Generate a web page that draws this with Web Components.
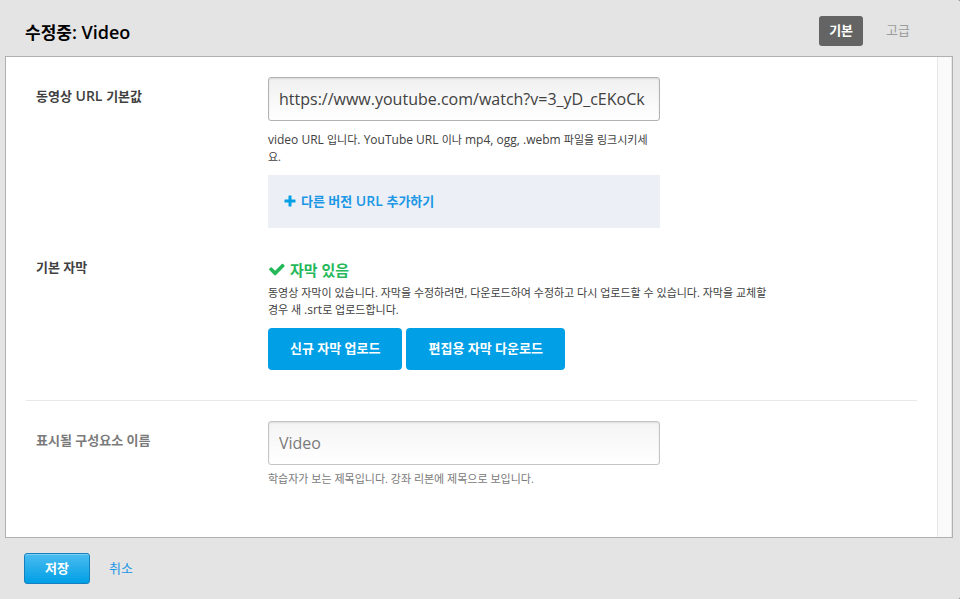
<!DOCTYPE html>
<html lang="ko">
<head>
<meta charset="utf-8">
<title>수정중: Video</title>
<style>
  body {
    margin: 0;
    background: #777;
    color: #414141;
    font-family: "Open Sans", "Noto Sans CJK KR", sans-serif;
    font-size: 13px;
    --blue: #009fe6;
    --link: #1b97e6;
    --green: #25b85a;
  }
  .lat { font-size: 12px; }
  .lat-label { font-size: 14px; }
  .lat-title { font-size: 18px; }
</style>
</head>
<body>
<modal-editor>
  <span slot="title">수정중<span class="lat-title">: Video</span></span>
  <mode-tabs slot="modes"></mode-tabs>
  <settings-row>
    <span slot="name">동영상<span class="lat-label"> URL </span>기본값</span>
    <text-field label="동영상 URL 기본값" value="https://www.youtube.com/watch?v=3_yD_cEKoCk"></text-field>
    <help-text class="spaced"><span class="lat">video URL </span>입니다<span class="lat">. YouTube URL </span>이나<span class="lat"> mp4, ogg, .webm </span>파일을 링크시키세<br>요.</help-text>
    <add-version>다른 버전<span class="lat-label"> URL </span>추가하기</add-version>
  </settings-row>
  <settings-row class="divided">
    <span slot="name">기본 자막</span>
    <status-line>자막 있음</status-line>
    <help-text>동영상 자막이 있습니다. 자막을 수정하려면, 다운로드하여 수정하고 다시 업로드할 수 있습니다. 자막을 교체할<br>경우 새 <span class="lat">.srt</span>로 업로드합니다.</help-text>
    <button-group>
      <action-button>신규 자막 업로드</action-button>
      <action-button>편집용 자막 다운로드</action-button>
    </button-group>
  </settings-row>
  <settings-row class="muted">
    <span slot="name">표시될 구성요소 이름</span>
    <text-field label="표시될 구성요소 이름" value="Video"></text-field>
    <help-text class="near">학습자가 보는 제목입니다. 강좌 리본에 제목으로 보입니다.</help-text>
  </settings-row>
  <modal-actions slot="actions"></modal-actions>
</modal-editor>
<script>
const define = (name, html, setup) => {
  const template = document.createElement('template');
  template.innerHTML = html;
  customElements.define(name, class extends HTMLElement {
    constructor() {
      super();
      this.attachShadow({ mode: 'open' }).append(template.content.cloneNode(true));
    }
    connectedCallback() { if (setup) setup(this, this.shadowRoot); }
  });
};

define('modal-editor', `
  <style>
    :host { display: flex; flex-direction: column; min-height: 100vh; box-sizing: border-box; background: #e4e4e4; border-radius: 0 2px 2px 0; }
    header { display: flex; justify-content: space-between; align-items: center; height: 56px; padding: 0 35px 0 25px; box-sizing: border-box; }
    h2 { margin: 0; padding-top: 8px; color: #000; font-size: 17px; line-height: 24px; font-weight: 600; }
    .panel { flex: 1; display: flex; margin: 0 7px 0 5px; border: 1px solid #b0b0b0; background: #fff; }
    main { flex: 1; padding: 0 20px 20px; }
    .track { width: 13px; background: #fafafa; border: solid #e7e7e7; border-width: 0 1px; }
    footer { display: flex; align-items: center; height: 61px; padding: 0 24px; }
  </style>
  <header><h2><slot name="title"></slot></h2><slot name="modes"></slot></header>
  <div class="panel"><main><slot></slot></main><div class="track"></div></div>
  <footer><slot name="actions"></slot></footer>`);

define('mode-tabs', `
  <style>
    :host { display: flex; gap: 8px; padding-top: 6px; }
    button { height: 30px; padding: 0 10px 4px; border: 0; border-radius: 3px; background: transparent; color: #9b9b9b; font-family: inherit; font-size: 13px; font-weight: 400; }
    button[aria-pressed=true] { background: #646464; color: #fff; font-weight: 600; }
    button + button { padding: 0 15px 4px; }
  </style>
  <button type="button" aria-pressed="true">기본</button><button type="button" aria-pressed="false">고급</button>`);

define('settings-row', `
  <style>
    :host { display: grid; grid-template-columns: 232px minmax(0, 1fr); padding: 20px 10px 0; }
    :host(.divided) { padding-bottom: 30px; border-bottom: 1px solid #e8e8e8; }
    :host(.muted) { color: #7a7a7a; --edge: #c4c4c4; --fill: #f4f4f4; }
    .name { padding-top: 9px; line-height: 20px; font-weight: 600; }
  </style>
  <div class="name"><slot name="name"></slot></div><div><slot></slot></div>`);

define('text-field', `
  <style>
    :host { display: block; max-width: 392px; }
    input { display: block; width: 100%; height: 44px; box-sizing: border-box; padding: 0 10px; border: 1px solid var(--edge, #b2b2b2); border-radius: 3px; background: linear-gradient(var(--fill, #f0f0f0), #fff); box-shadow: inset 0 1px 2px rgba(0,0,0,.1); color: inherit; font-family: inherit; font-size: 16px; outline: 0; }
  </style>
  <input type="text">`,
  (el, root) => {
    const input = root.querySelector('input');
    input.value = el.getAttribute('value');
    input.setAttribute('aria-label', el.getAttribute('label'));
  });

define('help-text', `
  <style>
    :host { display: block; font-size: 11px; line-height: 17px; }
    :host(.spaced) { padding: 10px 0; }
    :host(.near) { padding-top: 5px; }
  </style>
  <slot></slot>`);

define('add-version', `
  <style>
    :host { display: flex; align-items: center; max-width: 392px; height: 53px; padding: 0 16px 2px; box-sizing: border-box; background: #eceff5; }
    a { display: flex; align-items: center; gap: 5px; color: var(--link); font-weight: 600; line-height: 20px; text-decoration: none; }
    svg { fill: var(--blue); }
  </style>
  <a href="#"><svg width="12" height="12" viewBox="0 0 12 12" aria-hidden="true"><path d="M5 .5h2q.5 0 .5.5v3.500H11q.5 0 .5.5v2q0 .5-.5.5H7.500V11q0 .5-.5.5H5q-.5 0-.5-.5V7.500H1q-.5 0-.5-.5V5q0-.5.5-.5h3.500V1q0-.5.5-.5z"/></svg><span><slot></slot></span></a>`);

define('status-line', `
  <style>
    :host { display: flex; align-items: center; gap: 4px; padding: 9px 0 1px; color: var(--green); font-size: 15px; font-weight: 600; line-height: 26px; }
    svg { fill: currentColor; }
  </style>
  <svg width="18" height="14" viewBox="0 0 18 14" aria-hidden="true"><path d="M16.400 3.600 8 12q-.9.900-1.800 0L1.300 7.100q-.6-.7 0-1.300l1.300-1.300q.7-.6 1.300 0L7.100 7.700 13.800 1q.6-.6 1.300 0l1.300 1.300q.6.600 0 1.300z"/></svg>
  <span><slot></slot></span>`);

define('button-group', `
  <style>:host { display: flex; flex-wrap: wrap; gap: 4px; padding-top: 10px; }</style>
  <slot></slot>`);

define('action-button', `
  <style>
    :host { display: block; }
    button { height: 42px; padding: 0 22px 4px; border: 0; border-radius: 4px; background: var(--blue); color: #fff; font-family: inherit; font-size: 13px; font-weight: 700; }
  </style>
  <button type="button"><slot></slot></button>`);

define('modal-actions', `
  <style>
    :host { display: flex; align-items: center; gap: 19px; }
    button { height: 31px; padding: 0 20px 3px; border: 1px solid #1480bd; border-radius: 3px; background: linear-gradient(#4bbcf0, #009fe6); box-shadow: inset 0 1px 0 #80cff3; color: #fff; font-family: inherit; font-size: 13px; font-weight: 700; }
    a { padding-bottom: 3px; color: var(--link); text-decoration: none; }
  </style>
  <button type="button">저장</button><a href="#">취소</a>`);
</script>
</body>
</html>
